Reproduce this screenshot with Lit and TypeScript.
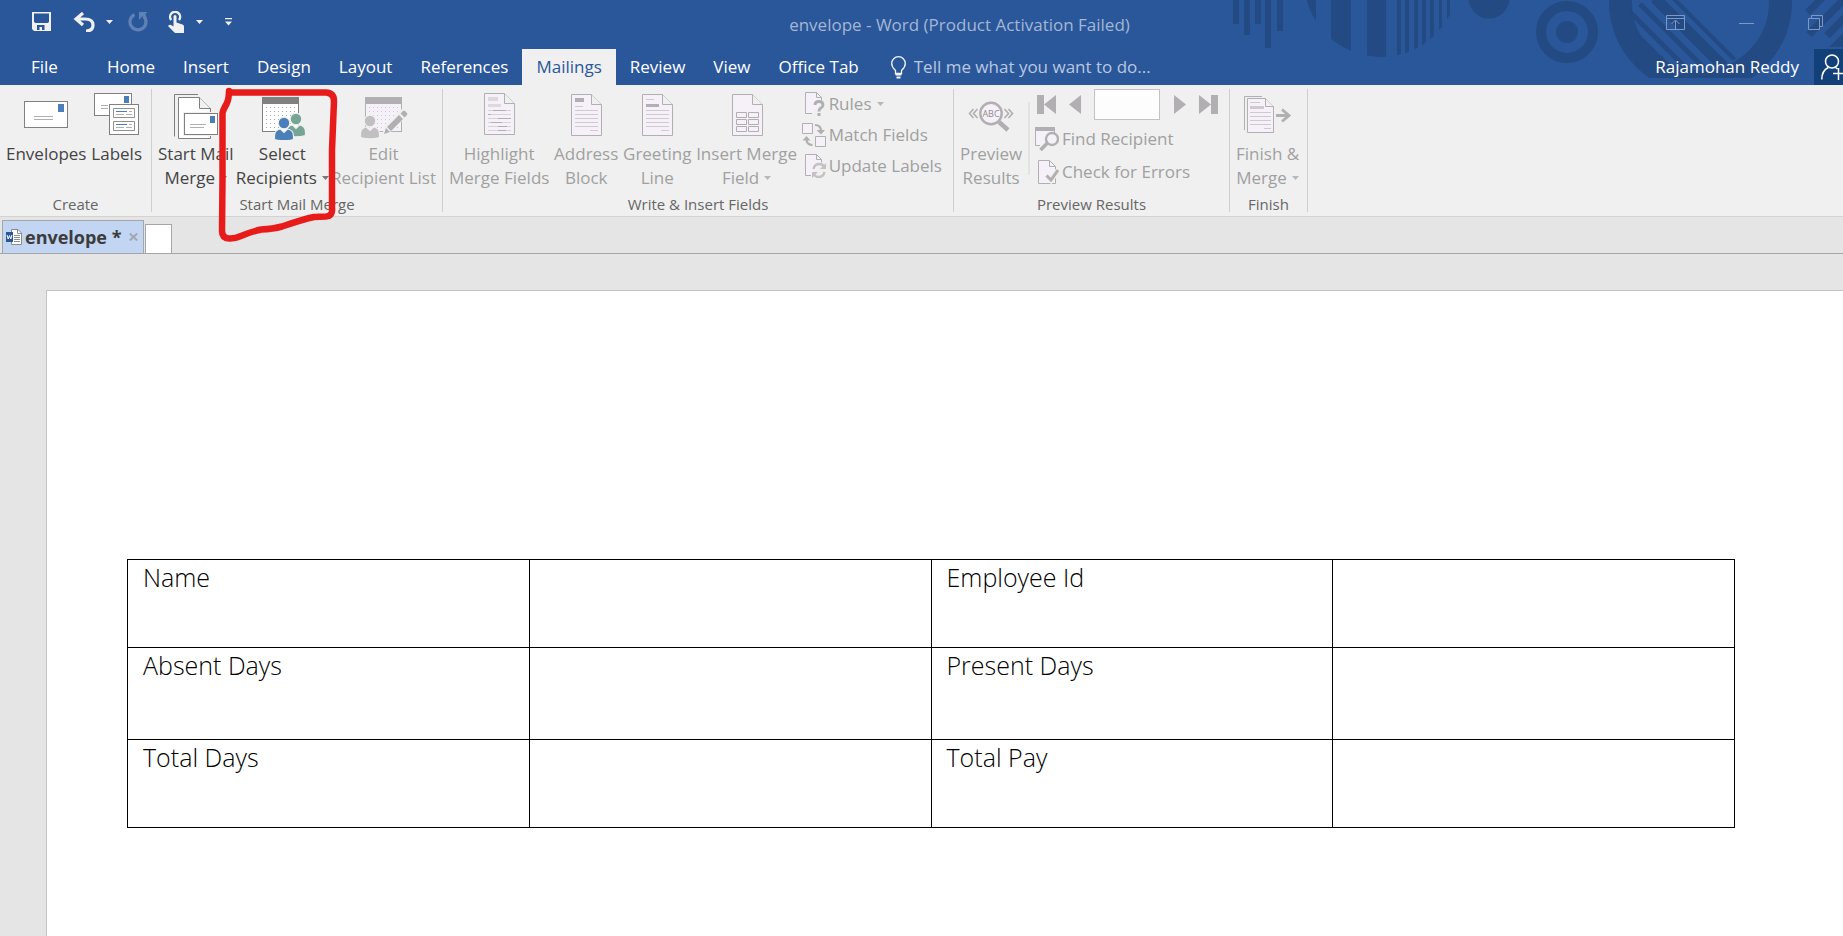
import { LitElement, html, css, svg, TemplateResult } from "lit";
import { customElement } from "lit/decorators.js";
import { classMap } from "lit/directives/class-map.js";

const G = "#b1afb1";
const P = "#f6f1f8";

const caret = html`<svg class="caret" width="7" height="4" viewBox="0 0 7 4" aria-hidden="true"><path d="M0 0h7L3.5 4z" fill="currentColor"/></svg>`;

const big = (body: TemplateResult) =>
  html`<svg width="48" height="48" viewBox="0 0 48 48" fill="none" aria-hidden="true">${body}</svg>`;
const small = (body: TemplateResult) =>
  html`<svg width="24" height="24" viewBox="0 0 24 24" fill="none" aria-hidden="true">${body}</svg>`;

const dots = (x: number, y: number, color: string) =>
  svg`${[0, 1, 2, 3, 4, 5].map((r) =>
    [0, 1, 2, 3, 4, 5, 6, 7].map((c) => svg`<rect x=${x + c * 4} y=${y + r * 4} width="1" height="1" fill=${color}/>`)
  )}`;

const person = (cx: number, cy: number, color: string, halo: string) => svg`
  <g fill=${color} stroke=${halo} stroke-width="1.2">
    <path d="M${cx - 9.5} ${cy + 13}v3.5q9.5 2.500 19 0v-3.500q0-6-6-7l-3.500 3.500l-3.500-3.500q-6 1-6 7z"/>
    <circle cx=${cx} cy=${cy} r="5.800"/>
  </g>`;

const page = (y: number, body: TemplateResult) => big(svg`
  <path d="M9.5 ${y}h20l10 10v31h-30z" fill=${P} stroke=${G}/>
  <path d="M29.5 ${y}v10h10" fill="#f0f0f0" stroke=${G}/>
  ${body}` as any);

const textLines = svg`<path d="M13 18.5h23M13 22.5h23M13 26.5h23M13 30.5h23M13 34.5h23M28 38.5h8" stroke="#cfcacf"/>`;

const icons: Record<string, TemplateResult> = {
  envelope: big(svg`
    <rect x="2.500" y="9.500" width="43" height="26" fill="#fff" stroke="#808080"/>
    <rect x="36" y="12" width="6" height="8" fill="#4a7fba"/>
    <path d="M12 24.500h19M12 27.500h19" stroke="#b0b0b0"/>` as any),
  labels: big(svg`
    <rect x="1.500" y="1.500" width="37" height="22" fill="#fff" stroke="#808080"/>
    <rect x="31" y="4" width="5" height="7" fill="#4a7fba"/>
    <path d="M8 13.500h7M8 16.500h7" stroke="#b0b0b0"/>
    <rect x="16.500" y="12.500" width="29" height="30" fill="#fff" stroke="#808080"/>
    <path d="M20.500 16.500h21v9h-21zM20.500 29.500h21v9h-21z" stroke="#909090"/>
    <path d="M23 19.500h11M23 32.500h11" stroke="#4a7fba"/>
    <path d="M36 19.500h3M23 22.500h8M33 22.500h6M36 32.500h3M23 35.500h8M33 35.500h6" stroke="#b0b0b0"/>` as any),
  start: big(svg`
    <path d="M26 2.500H2.500V44.500" stroke="#808080"/>
    <path d="M6.500 5.500h21l11 11v30h-32z" fill="#fff" stroke="#808080"/>
    <path d="M27.500 5.500v11h11" fill="#f0f0f0" stroke="#808080"/>
    <rect x="11" y="20" width="37" height="24" fill="#f0f0f0"/>
    <rect x="12.500" y="21.500" width="33" height="21" fill="#fff" stroke="#808080"/>
    <rect x="38" y="24" width="5" height="7" fill="#4a7fba"/>
    <path d="M18 32.500h16M18 35.500h14" stroke="#b0b0b0"/>` as any),
  select: big(svg`
    <rect x="4.500" y="5.500" width="36" height="34" fill="#fff" stroke="#808080"/>
    <rect x="4" y="5" width="37" height="7" fill="#808080"/>
    ${dots(8, 15, "#a8a8a8")}
    ${person(38, 27, "#77a595", "#f0f0f0")}${person(26, 31, "#4a7fba", "#f0f0f0")}` as any),
  edit: big(svg`
    <rect x="5.500" y="5.500" width="36" height="34" fill=${P} stroke=${G}/>
    <rect x="5" y="5" width="37" height="7" fill=${G}/>
    ${dots(9, 15, "#cdc8cd")}
    ${person(10, 29, "#c2bfc2", "#f0f0f0")}
    <path d="M22 43l3-9L41 17l7 6L32 39z" fill="#f0f0f0"/>
    <path d="M24 42l2-6l4 4zM27 35L39 23l4 4L31 39zM40.500 21.500l2.500-2.500q1-.8 2 0l2 2q.8 1 0 2l-2.500 2.500z" fill=${G}/>` as any),
  highlight: page(1.5, svg`
    <path d="M13 5h10v4H13zM13 12h13v3H13z" fill="#dcd8dc"/>
    <path d="M13 18.500h23M13 22.500h23M13 26.500h23M13 30.500h23M13 34.500h23M13 38.500h23" stroke="#d8d3d8"/>
    <path d="M18 18.500h13M13 22.500h3M23 26.500h13M16 30.500h11M23 34.500h9M23 38.500h8" stroke=${G}/>` as any),
  address: page(2.5, svg`<rect x="13" y="6" width="9" height="4" fill=${G}/><path d="M13 14.500h8" stroke="#cfcacf"/>${textLines}` as any),
  greeting: page(2.5, svg`<rect x="13" y="12" width="13" height="3" fill=${G}/><path d="M13 7.500h8" stroke="#cfcacf"/>${textLines}` as any),
  insert: page(2.5, svg`<path d="M13.500 20.500h10v5h-10zM25.500 20.500h10v5h-10zM13.500 27.500h10v5h-10zM25.500 27.500h10v5h-10zM13.500 34.500h10v5h-10zM25.500 34.500h10v5h-10z" stroke=${G}/>` as any),
  preview: big(svg`
    <path d="M32 30l9 8" stroke=${G} stroke-width="4.500"/>
    <circle cx="24" cy="21.500" r="10.700" fill=${P} stroke=${G} stroke-width="2.400"/>
    <text x="24" y="25" text-anchor="middle" font-family="Open Sans" font-size="9" fill="#8e8c8e">ABC</text>
    <path d="M6.500 17L2.500 21.500l4 4.500M10.500 17l-4 4.500l4 4.500M37.500 17l4 4.500l-4 4.500M41.500 17l4 4.500l-4 4.500" stroke=${G} stroke-width="1.600"/>` as any),
  finish: big(svg`
    <path d="M18 4.500H.5V38" stroke=${G}/>
    <path d="M3.500 6.500h18l8 8v26h-26z" fill=${P} stroke=${G}/>
    <path d="M21.500 6.500v8h8" fill="#f0f0f0" stroke=${G}/>
    <path d="M6 10.500h10M6 20.500h21M6 24.500h21M6 28.500h21M6 32.500h21M20 36.500h7" stroke="#cfcacf"/>
    <rect x="6" y="14" width="14" height="3" fill="#cfcacf"/>
    <path d="M32 23.500h13M38 17.500l7 6l-7 6" stroke=${G} stroke-width="2.800"/>` as any),
  rules: small(svg`
    <path d="M10 21.500H3.500V.5h11l5 5v3" fill=${P} stroke=${G}/><path d="M14.500 .5v5h5" stroke=${G}/>
    <path d="M13 13q0-3.500 4-3.500t4 3.500q0 2-2 3t-2 3.500" stroke=${G} stroke-width="2.800"/><rect x="15.500" y="21" width="3" height="3" fill=${G}/>` as any),
  match: small(svg`
    <path d="M.5 .5h10v10H.5zM13.500 13.500h10v10h-10z" fill=${P} stroke=${G}/>
    <path d="M13 2q6 0 6 6" stroke=${G} stroke-width="2.200"/><path d="M14.500 7h8.500l-4 4.500z" fill=${G}/>
    <path d="M10.500 22q-6 0-6-6" stroke=${G} stroke-width="2.200"/><path d="M.5 17.500h8l-4-4.500z" fill=${G}/>` as any),
  update: small(svg`
    <path d="M9 21.500H3.500V.5h11l5 5v3" fill=${P} stroke=${G}/><path d="M14.500 .5v5h5" stroke=${G}/>
    <path d="M11.500 15q1-5 6-5q3 0 4.500 2.500M22.500 18q-1 5-6 5q-3 0-4.500-2.500" stroke="#c4c1c4" stroke-width="2.400"/>
    <path d="M24 9v6h-6zM10 24v-6h6z" fill="#c4c1c4"/>` as any),
  find: small(svg`
    <path d="M5 18.500H.5V1h19v5" fill=${P} stroke=${G}/><rect width="20" height="4" fill=${G}/>
    <path d="M5.500 23l7-7" stroke=${G} stroke-width="3.600"/>
    <circle cx="17" cy="12" r="6" fill=${P} stroke=${G} stroke-width="2.400"/>` as any),
  check: small(svg`
    <path d="M3.500 .5h11l6 6v17h-17z" fill=${P} stroke=${G}/><path d="M14.500 .5v6h6" stroke=${G}/>
    <path d="M11 15l5 5.500l7.500-11" stroke="#f0f0f0" stroke-width="5"/>
    <path d="M11.500 15.500l4.500 4.500l7-10" stroke=${G} stroke-width="3"/>` as any),
};

@customElement("ribbon-button")
class RibbonButton extends LitElement {
  static properties = {
    icon: {}, lines: { type: Array }, menu: { type: Boolean }, disabled: { type: Boolean },
  };
  declare icon: string;
  declare lines: string[];
  declare menu: boolean;
  declare disabled: boolean;

  static styles = css`
    :host { display: block; }
    button {
      display: flex; flex-direction: column; align-items: center;
      padding: 4px 0 0; border: 0; background: none; color: #444;
      font: 17px/24px "Open Sans", "Noto Sans", sans-serif; white-space: nowrap;
    }
    button:disabled { color: #a0a0a0; }
    svg { display: block; flex: none; }
    button > svg { margin-bottom: 2px; }
    .line { display: flex; align-items: center; gap: 5px; }
    .caret { color: #777; }
    :disabled .caret { color: #b8b8b8; }
  `;

  render() {
    const last = this.lines.length - 1;
    return html`<button type="button" ?disabled=${this.disabled}>
      ${icons[this.icon]}
      ${this.lines.map((t, i) => html`<span class="line">${t}${this.menu && i === last ? caret : ""}</span>`)}
    </button>`;
  }
}

@customElement("ribbon-row")
class RibbonRow extends LitElement {
  static properties = { icon: {}, label: {}, menu: { type: Boolean } };
  declare icon: string;
  declare label: string;
  declare menu: boolean;

  static styles = css`
    :host { display: flex; }
    button {
      display: flex; align-items: center; gap: 3px; padding: 0; border: 0; background: none;
      color: #a0a0a0; font: 17px/24px "Open Sans", "Noto Sans", sans-serif; white-space: nowrap;
    }
    .caret { color: #b8b8b8; margin-left: 3px; }
  `;

  render() {
    return html`<button type="button" disabled>${icons[this.icon]}<span>${this.label}</span>${this.menu ? caret : ""}</button>`;
  }
}

const tabs = ["File", "Home", "Insert", "Design", "Layout", "References", "Mailings", "Review", "View", "Office Tab"];
const rows = [
  ["Name", "", "Employee Id", ""],
  ["Absent Days", "", "Present Days", ""],
  ["Total Days", "", "Total Pay", ""],
];

@customElement("app-root")
class AppRoot extends LitElement {
  static styles = css`
    * { box-sizing: border-box; }
    :host {
      display: flex; flex-direction: column; position: relative; min-height: 100vh; overflow: hidden;
      background: #e5e5e5; font: 17px/24px "Open Sans", "Noto Sans", sans-serif; color: #444;
    }
    button { font: inherit; color: inherit; border: 0; background: none; padding: 0; }
    svg { display: block; flex: none; }
    .head { position: relative; background: #2a579a; color: #fff; }
    .art { position: absolute; top: 0; right: 0; }
    .title-bar { position: relative; display: flex; height: 49px; }
    .quick { display: flex; align-items: center; height: 43px; padding: 0 20px 0 32px; color: #f0f0f0; }
    .undo { margin-left: 22px; }
    .drop { margin-left: 11px; }
    .redo { margin-left: 15px; }
    .touch { margin-left: 20px; }
    .custom { margin-left: 22px; }
    h1 { flex: 1; margin: 0; padding-top: 13px; font: inherit; text-align: center; color: #a3b6d4; }
    .window { display: flex; align-items: flex-start; gap: 54px; padding: 15px 20px 0 0; color: #7f9ac2; }
    .menu-bar { position: relative; display: flex; height: 36px; white-space: nowrap; }
    .tab { padding: 0 14px; }
    .tab:first-child { width: 93px; padding-left: 31px; text-align: left; }
    .tab.active { background: #f0f0f0; color: #2a579a; }
    .tell { display: flex; flex: 1; align-items: center; gap: 8px; padding-left: 18px; }
    .tell input { flex: 1; min-width: 0; padding: 0; border: 0; background: none; font: inherit; color: #fff; outline: 0; }
    .tell input::placeholder { color: #b9c8e0; opacity: 1; }
    .user { padding: 0 15px; }
    .share { width: 29px; background: #124078; overflow: hidden; padding-left: 7px; }

    .ribbon { display: flex; height: 132px; background: #f0f0f0; border-bottom: 1px solid #d2d2d2; }
    .group { display: flex; flex-direction: column; flex: none; margin: 0; padding: 3px 6px 0; }
    .items { display: flex; justify-content: space-between; height: 106px; }
    .caption { margin: 0; font-size: 15px; line-height: 20px; text-align: center; color: #666; }
    .create { width: 151px; }
    .merge { width: 290px; }
    .write { width: 510px; }
    .results { width: 275px; }
    .finish { width: 77px; }
    .create .items { padding-right: 3px; }
    .write .items, .results .items { padding-right: 5px; }
    .rule { flex: none; width: 1px; margin: 4px 0; background: #cfcfcf; }
    .rule.short { width: 2px; margin: 14px 0 19px; background: #e3e3e3; }
    .stack { display: grid; grid-auto-rows: 31px; align-items: center; align-content: start; }
    .stack.loose { grid-auto-rows: 33px; padding-top: 1px; }
    .nav { display: flex; align-items: center; justify-content: space-between; width: 183px; padding: 0 0 2px 2px; }
    .nav button { color: #b1afb1; }
    .nav input { width: 66px; height: 31px; border: 1px solid #c3c3c3; background: #fdfdfd; font: inherit; }

    .files { display: flex; align-items: flex-end; height: 37px; padding-left: 2px; gap: 1px; border-bottom: 1px solid #a6a6a6; }
    .file { display: flex; align-items: center; height: 33px; width: 142px; padding: 0 5px 0 3px; background: #c2d5f2; border: 1px solid #a6a6a6; border-bottom: 0; font-size: 18px; font-weight: 700; color: #3c3c3c; }
    .file span { flex: 1; padding-left: 3px; white-space: nowrap; }
    .new { width: 27px; height: 29px; background: #fff; border: 1px solid #a6a6a6; border-bottom: 0; }

    .page { flex: 1; margin: 36px 0 0 46px; padding: 268px 108px 0 80px; background: #fff; border: solid #c4c4c4; border-width: 1px 0 0 1px; }
    table { width: 100%; table-layout: fixed; border-collapse: collapse; color: #000; font-size: 25px; font-weight: 300; line-height: 34px; }
    td { height: 88px; padding: 0 15px; border: 1px solid #000; vertical-align: top; }
    .tall td { height: 92px; }
    .ink { position: absolute; left: 216px; top: 86px; pointer-events: none; }
  `;

  button(icon: string, lines: string[], menu = false, disabled = true) {
    return html`<ribbon-button .icon=${icon} .lines=${lines} .menu=${menu} .disabled=${disabled}></ribbon-button>`;
  }

  row(icon: string, label: string, menu = false) {
    return html`<ribbon-row .icon=${icon} .label=${label} .menu=${menu}></ribbon-row>`;
  }

  art() {
    return html`<svg class="art" width="643" height="85" viewBox="1200 0 643 85" fill="#234a82" aria-hidden="true">
      <defs>
        <clipPath id="ball"><circle cx="1381" cy="-20" r="77"/></clipPath>
        <clipPath id="hole"><ellipse cx="1698" cy="2" rx="68" ry="68"/></clipPath>
        <clipPath id="low"><rect x="1600" width="243" height="78"/></clipPath>
      </defs>
      <path d="M1233 0h6v24h-6zM1244 0h6v35h-6zM1255 0h6v24h-6zM1265 0h6v48h-6zM1277 0h6v31h-6z"/>
      <g clip-path="url(#ball)"><path d="M1300 0h16v60h-16zM1331 0h20v60h-20zM1367 0h19v60h-19zM1397 0h4v60h-4zM1405 0h4v60h-4zM1414 0h4v60h-4zM1422 0h4v60h-4zM1430 0h4v60h-4zM1439 0h3v60h-3zM1447 0h3v60h-3zM1455 0h3v60h-3z"/></g>
      <circle cx="1489" cy="-2" r="20.500"/>
      <circle cx="1567" cy="32" r="26" fill="none" stroke="#234a82" stroke-width="10"/>
      <circle cx="1567" cy="32" r="11"/>
      <g clip-path="url(#low)">
        <circle cx="1700.500" cy="2" r="80" fill="none" stroke="#234a82" stroke-width="23"/>
        <g clip-path="url(#hole)" stroke="#234a82"><path d="M1655-2L1742 85" stroke-width="11"/><path d="M1670-5L1750 75" stroke-width="4"/><path d="M1640 4L1715 79M1628 10L1697 79" stroke-width="5"/><path d="M1625 23L1690 88" stroke-width="5"/></g>
      </g>
      <path d="M1815 0L1805 10L1810 15L1825 0zM1838 0L1806 32L1812 37L1843 6V0zM1843 14L1824 33L1830 38L1843 25zM1843 33L1829 47L1843 47z" />
    </svg>`;
  }

  render() {
    return html`
      <header class="head">
        ${this.art()}
        <div class="title-bar">
          <div class="quick">
            <button aria-label="Save"><svg width="19" height="19" viewBox="0 0 19 19"><path fill="currentColor" fill-rule="evenodd" d="M0 0h19v19H2l-2-2zM2 1.500v8.500l1.500 1h12L17 10V1.500zM5 13v5h2.500v-3H10v3h2.500v-5z"/></svg></button>
            <button class="undo" aria-label="Undo"><svg width="22" height="20" viewBox="0 0 22 20"><path d="M10 1L3 7l7 6M3.500 7H12q8 0 8 6t-7 6" fill="none" stroke="currentColor" stroke-width="3.200"/></svg></button>
            <button class="drop" aria-label="Undo list">${caret}</button>
            <button class="redo" aria-label="Repeat"><svg width="20" height="20" viewBox="0 0 20 20"><path d="M6.500 2.600A8 8 0 1 0 15.500 4" fill="none" stroke="#5f82b6" stroke-width="3.200"/><path d="M11 0h8.500l-2 2l2 7h-2.500l-2.500-5L11 8z" fill="#5f82b6"/></svg></button>
            <button class="touch" aria-label="Touch mode"><svg width="17" height="22" viewBox="0 0 17 22"><path d="M3.200 9A5 5 0 1 1 11 9" fill="none" stroke="currentColor" stroke-width="2.400"/><path d="M5.500 5.500q0-1.500 1.500-1.500t1.500 1.500v6l6 2q1.500.5 1.500 2v6.500H7L0 15q1.500-2 3-1l2.500 1.500z" fill="currentColor"/></svg></button>
            <button class="drop" aria-label="Touch mode list">${caret}</button>
            <button class="custom" aria-label="Customize toolbar"><svg width="8" height="8" viewBox="0 0 8 8"><path d="M0 0h7v1.200H0zM0 3.500h7L3.500 7.500z" fill="currentColor"/></svg></button>
          </div>
          <h1>envelope - Word (Product Activation Failed)</h1>
          <div class="window">
            <button aria-label="Ribbon display options"><svg width="19" height="15" viewBox="0 0 19 15" fill="none" stroke="currentColor"><path d="M.5 .5h18v14H.5zM.5 3.500h18M9.500 14V5.500M5.500 9l4-4l4 4"/></svg></button>
            <button aria-label="Minimize"><svg width="15" height="15" viewBox="0 0 15 15" stroke="currentColor"><path d="M0 8.500h15"/></svg></button>
            <button aria-label="Restore"><svg width="15" height="15" viewBox="0 0 15 15" fill="none" stroke="currentColor"><path d="M.5 3.500h11v11H.5zM3.500 3V.5h11v11H12"/></svg></button>
          </div>
        </div>
        <nav class="menu-bar">
          ${tabs.map((t) => html`<button class=${classMap({ tab: true, active: t === "Mailings" })}>${t}</button>`)}
          <label class="tell">
            <svg width="15" height="23" viewBox="0 0 15 23" fill="none" stroke="#f4f6fa"><path d="M4.500 17.500v-3Q.7 11 .7 7.500A6.700 6.700 0 0 1 14.300 7.500Q14.300 11 10.500 14.500v3z" stroke-width="1.300"/><path d="M4.500 18.500h6M5.500 21.500h4" stroke-width="2"/></svg>
            <input type="text" aria-label="Tell me" placeholder="Tell me what you want to do..." />
          </label>
          <button class="user">Rajamohan Reddy</button>
          <button class="share" aria-label="Share"><svg width="26" height="26" viewBox="0 0 26 26" fill="none" stroke="#fff" stroke-width="1.500"><circle cx="11" cy="7.500" r="6.500"/><path d="M.8 25.500q0-9 6.500-12M14.500 13.500l2 1.500M12 19.500h12M17.500 14v12"/></svg></button>
        </nav>
      </header>

      <section class="ribbon" aria-label="Mailings">
        <div class="group create">
          <div class="items">${this.button("envelope", ["Envelopes"], false, false)}${this.button("labels", ["Labels"], false, false)}</div>
          <p class="caption">Create</p>
        </div>
        <div class="rule"></div>
        <div class="group merge">
          <div class="items">
            ${this.button("start", ["Start Mail", "Merge"], true, false)}
            ${this.button("select", ["Select", "Recipients"], true, false)}
            ${this.button("edit", ["Edit", "Recipient List"])}
          </div>
          <p class="caption">Start Mail Merge</p>
        </div>
        <div class="rule"></div>
        <div class="group write">
          <div class="items">
            ${this.button("highlight", ["Highlight", "Merge Fields"])}
            ${this.button("address", ["Address", "Block"])}
            ${this.button("greeting", ["Greeting", "Line"])}
            ${this.button("insert", ["Insert Merge", "Field"], true)}
            <div class="stack">${this.row("rules", "Rules", true)}${this.row("match", "Match Fields")}${this.row("update", "Update Labels")}</div>
          </div>
          <p class="caption">Write &amp; Insert Fields</p>
        </div>
        <div class="rule"></div>
        <div class="group results">
          <div class="items">
            ${this.button("preview", ["Preview", "Results"])}
            <div class="rule short"></div>
            <div class="stack loose">
              <div class="nav">
                <button disabled aria-label="First record"><svg width="19" height="19" viewBox="0 0 19 19" fill="currentColor"><path d="M0 0h7v19H0zM19 0v19L7 9.500z"/></svg></button>
                <button disabled aria-label="Previous record"><svg width="12" height="19" viewBox="0 0 12 19" fill="currentColor"><path d="M12 0v19L0 9.500z"/></svg></button>
                <input type="text" aria-label="Record number" />
                <button disabled aria-label="Next record"><svg width="12" height="19" viewBox="0 0 12 19" fill="currentColor"><path d="M0 0v19l12-9.500z"/></svg></button>
                <button disabled aria-label="Last record"><svg width="19" height="19" viewBox="0 0 19 19" fill="currentColor"><path d="M12 0h7v19h-7zM0 0v19l12-9.500z"/></svg></button>
              </div>
              ${this.row("find", "Find Recipient")}${this.row("check", "Check for Errors")}
            </div>
          </div>
          <p class="caption">Preview Results</p>
        </div>
        <div class="rule"></div>
        <div class="group finish">
          <div class="items">${this.button("finish", ["Finish &", "Merge"], true)}</div>
          <p class="caption">Finish</p>
        </div>
        <div class="rule"></div>
      </section>

      <div class="files">
        <div class="file">
          <svg width="16" height="16" viewBox="0 0 16 16"><path d="M5.500 .5H12l3.500 3.500v11.500h-10z" fill="#fff" stroke="#8a8a8a"/><path d="M11.500 .5v4h4M8 6.500h6M8 8.500h6M8 10.500h6M8 12.500h6" fill="none" stroke="#8a8a8a"/><path d="M0 3h7v10H0z" fill="#2a579a"/><path d="M1 6l1.200 4l1.300-3.500L4.800 10L6 6" fill="none" stroke="#fff"/></svg>
          <span>envelope *</span>
          <button aria-label="Close envelope"><svg width="9" height="8" viewBox="0 0 9 8"><path d="M.8.5l7.400 7M8.200.5l-7.400 7" stroke="#a3a8b0" stroke-width="2"/></svg></button>
        </div>
        <button class="new" aria-label="New document"></button>
      </div>

      <main class="page">
        <table>
          <tbody>
            ${rows.map((r, i) => html`<tr class=${classMap({ tall: i === 1 })}>${r.map((c) => html`<td>${c}</td>`)}</tr>`)}
          </tbody>
        </table>
      </main>

      <svg class="ink" width="126" height="160" viewBox="216 86 126 160" fill="none" stroke="#e81b1b" stroke-width="6.500" stroke-linecap="round" stroke-linejoin="round" aria-hidden="true">
        <path d="M229 92.500H326Q334 93 334 101L332 150V208Q333 216 326 216.500L314 217Q304 219 282 226.500Q273 229 261 229.500Q250 232 241 236Q234 239 229 238.500Q222 238 222 231L222.500 180V113Q223 110 226.500 104Q229 99 229 91"/>
      </svg>
    `;
  }
}
